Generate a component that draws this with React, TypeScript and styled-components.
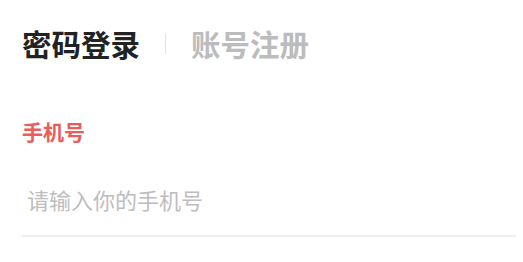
import React from 'react';
import styled, { createGlobalStyle } from 'styled-components';

const GlobalStyle = createGlobalStyle`
  html, body {
    margin: 0;
    padding: 0;
    background: #fff;
  }
  body {
    font-family: "Noto Sans CJK SC", "Noto Sans", sans-serif;
  }
`;

const Page = styled.div`
  width: 494px;
  padding: 23px 0 0 22px;
`;

const Tabs = styled.div`
  display: flex;
  align-items: center;
`;

const Tab = styled.div<{ $active?: boolean }>`
  font-size: 29.5px;
  line-height: 40px;
  font-weight: 700;
  color: ${(p) => (p.$active ? '#222222' : '#bcbcbc')};
`;

const Divider = styled.span`
  width: 1px;
  height: 21px;
  background: #e2e2e2;
  margin: 0 25px;
`;

const Field = styled.div`
  display: flex;
  flex-direction: column;
  margin-top: 54px;
`;

const Label = styled.label`
  font-size: 21px;
  line-height: 28px;
  font-weight: 700;
  color: #e95d5b;
`;

const Input = styled.input`
  margin-top: 39px;
  border: none;
  border-bottom: 2px solid #efefef;
  outline: none;
  padding: 0 0 21px 5px;
  font-family: inherit;
  font-size: 22px;
  line-height: 30px;
  color: #333;
  background: transparent;

  &::placeholder {
    color: #bdbdbd;
  }
`;

export default function App() {
  return (
    <>
      <GlobalStyle />
      <Page>
        <Tabs>
          <Tab $active>密码登录</Tab>
          <Divider />
          <Tab>账号注册</Tab>
        </Tabs>
        <Field>
          <Label>手机号</Label>
          <Input placeholder="请输入你的手机号" />
        </Field>
      </Page>
    </>
  );
}
